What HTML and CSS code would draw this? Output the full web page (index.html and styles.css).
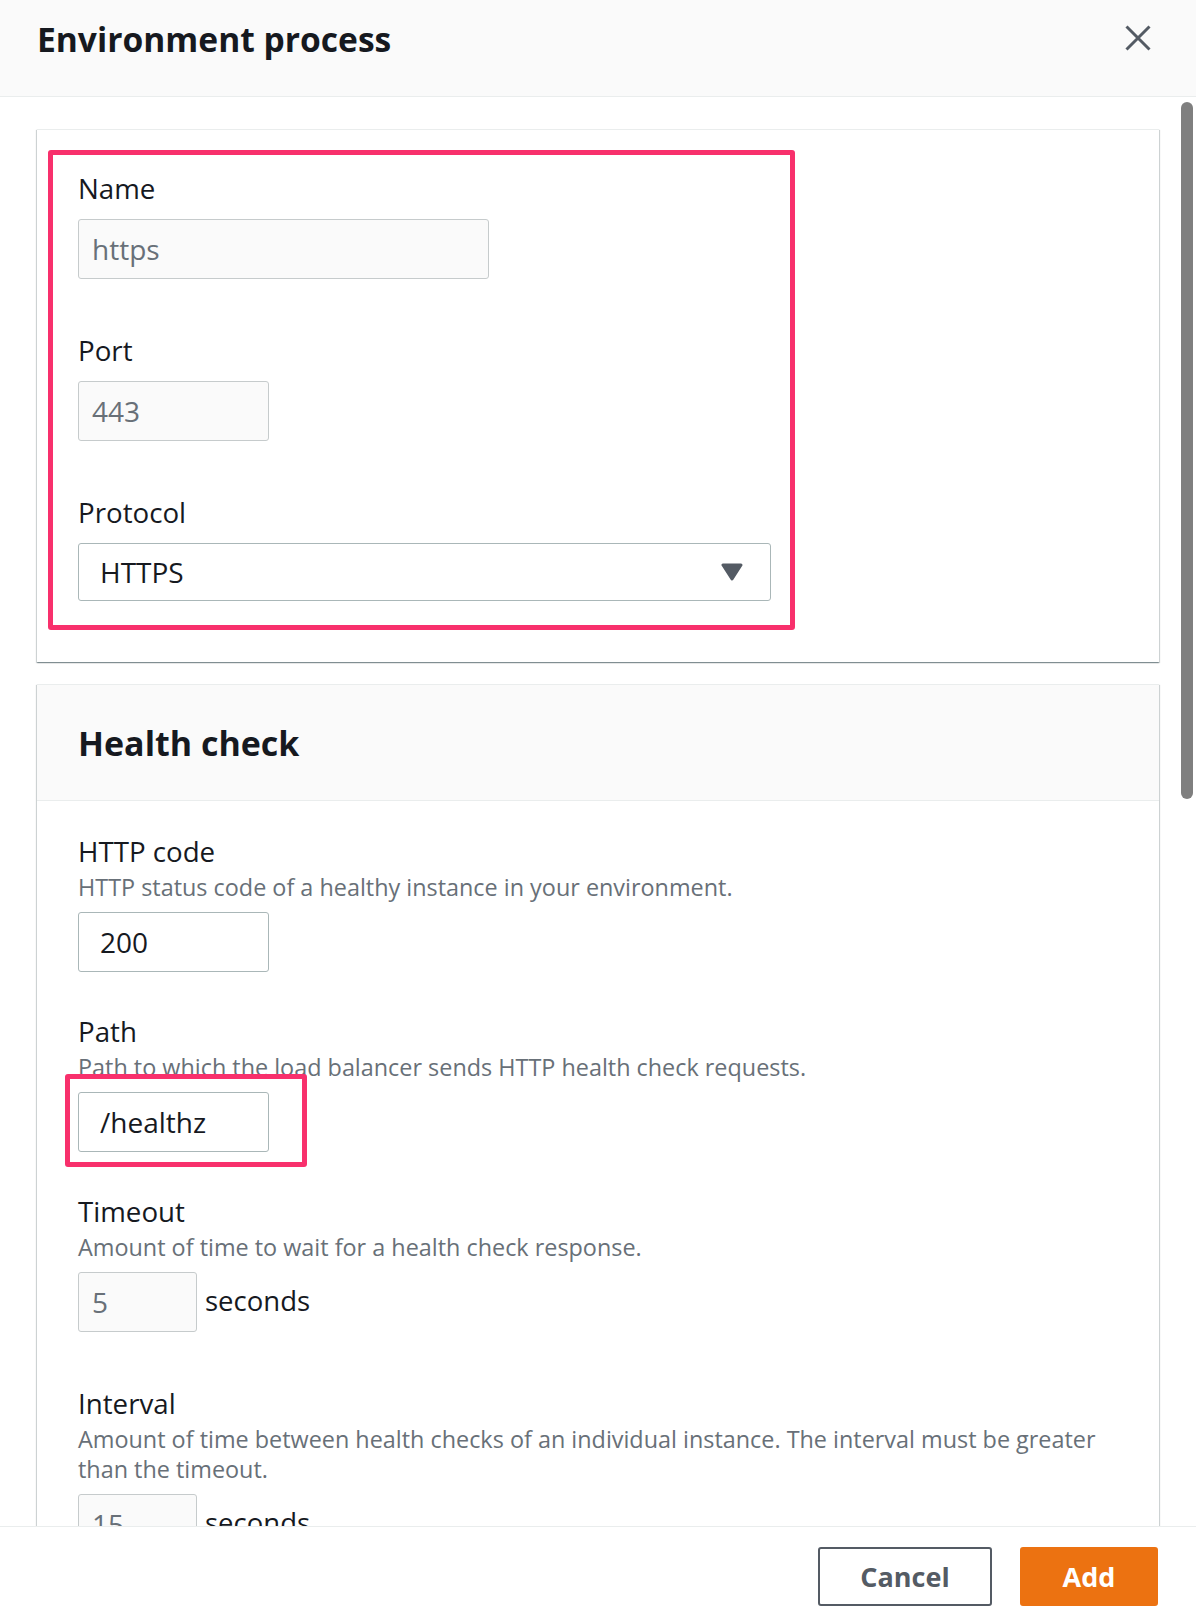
FILE: index.html
```html
<!DOCTYPE html>
<html lang="en">

<head>
    <meta charset="UTF-8">
    <meta name="viewport" content="width=device-width, initial-scale=1.0">
    <title>Environment process</title>
    <link rel="stylesheet" href="styles.css">
</head>

<body>

    <div class="modal">
        <div class="modal-header">
            <h2>Environment process</h2>
            <button class="close-btn" aria-label="Close">
                <svg width="26" height="26" viewBox="0 0 26 26">
                    <path d="M1.5 1.5L24.5 24.5M24.5 1.5L1.5 24.5" stroke="#545b64" stroke-width="3" fill="none" />
                </svg>
            </button>
        </div>

        <div class="modal-body">
            <div class="scroll-thumb"></div>

            <!-- Process settings -->
            <div class="card card-config">
                <div class="highlight">
                    <div class="field">
                        <label class="label">Name</label>
                        <input class="input disabled w-name" value="https" readonly>
                    </div>
                    <div class="field">
                        <label class="label">Port</label>
                        <input class="input disabled w-short" value="443" readonly>
                    </div>
                    <div class="field">
                        <label class="label">Protocol</label>
                        <div class="select">
                            <span>HTTPS</span>
                            <svg width="22" height="18" viewBox="0 0 22 18">
                                <path d="M2 2H20L11 16Z" fill="#545b64" stroke="#545b64" stroke-width="3" stroke-linejoin="round" />
                            </svg>
                        </div>
                    </div>
                </div>
            </div>

            <!-- Health check -->
            <div class="card card-health">
                <div class="card-header">
                    <h3>Health check</h3>
                </div>
                <div class="card-content">
                    <div class="field">
                        <label class="label">HTTP code</label>
                        <div class="desc">HTTP status code of a healthy instance in your environment.</div>
                        <input class="input control w-short" value="200">
                    </div>
                    <div class="field">
                        <label class="label">Path</label>
                        <div class="desc">Path to which the load balancer sends HTTP health check requests.</div>
                        <div class="input-wrap control">
                            <input class="input w-short" value="/healthz">
                            <div class="annot"></div>
                        </div>
                    </div>
                    <div class="field field-suffix">
                        <label class="label">Timeout</label>
                        <div class="desc">Amount of time to wait for a health check response.</div>
                        <div class="input-row control">
                            <input class="input disabled w-tiny" value="5" readonly>
                            <span class="suffix">seconds</span>
                        </div>
                    </div>
                    <div class="field">
                        <label class="label">Interval</label>
                        <div class="desc">Amount of time between health checks of an individual instance. The interval must be greater than the timeout.</div>
                        <div class="input-row control">
                            <input class="input disabled w-tiny" value="15" readonly>
                            <span class="suffix">seconds</span>
                        </div>
                    </div>
                </div>
            </div>
        </div>

        <div class="modal-footer">
            <button class="btn btn-cancel">Cancel</button>
            <button class="btn btn-add">Add</button>
        </div>
    </div>

</body>

</html>
```

FILE: styles.css
```css
* {
    margin: 0;
    padding: 0;
    box-sizing: border-box;
}

body {
    font-family: 'Open Sans', sans-serif;
    color: #16191f;
    background: #fff;
    height: 100vh;
    overflow: hidden;
}

.modal {
    display: flex;
    flex-direction: column;
    height: 100vh;
}

/* Header */
.modal-header {
    display: flex;
    justify-content: space-between;
    align-items: flex-start;
    height: 97px;
    padding: 19px 45px 0 37px;
    background: #fafafa;
    border-bottom: 1px solid #eaeded;
}

.modal-header h2 {
    font-size: 33.6px;
    line-height: 40px;
    font-weight: 700;
}

.close-btn {
    width: 26px;
    height: 26px;
    margin-top: 6px;
    background: none;
    border: none;
    cursor: pointer;
}

.close-btn svg {
    display: block;
}

/* Scrolling body */
.modal-body {
    flex: 1;
    position: relative;
    overflow: hidden;
    padding: 32px 37px 0;
}

.scroll-thumb {
    position: absolute;
    top: 5px;
    right: 3px;
    width: 12px;
    height: 697px;
    border-radius: 6px;
    background: #7f7f7f;
}

.card {
    background: #fff;
    border-top: 1px solid #eaeded;
    box-shadow: 0 1px 1px 0 rgba(0, 28, 36, 0.3),
        1px 1px 1px 0 rgba(0, 28, 36, 0.15),
        -1px 1px 1px 0 rgba(0, 28, 36, 0.15);
}

.card-config {
    padding: 20px 11px 32px;
}

.highlight {
    width: 747px;
    padding: 17px 19px 24px 25px;
    border: 5px solid #f8306c;
    border-radius: 3px;
}

.highlight .field + .field {
    margin-top: 55px;
}

.card-health {
    margin-top: 22px;
}

.card-header {
    padding: 38px 41px 37px;
    background: #fafafa;
    border-bottom: 1px solid #eaeded;
}

.card-header h3 {
    font-size: 34px;
    line-height: 40px;
    font-weight: 700;
}

.card-content {
    padding: 34px 41px;
}

.card-content .field + .field {
    margin-top: 43px;
}

.card-content .field-suffix + .field {
    margin-top: 55px;
}

/* Form fields */
.label {
    display: block;
    font-size: 27.7px;
    line-height: 32px;
    margin-bottom: 3px;
}

.card-content .label {
    margin-bottom: 5px;
}

.desc {
    font-size: 23.4px;
    line-height: 30px;
    color: #687078;
}

.control {
    margin-top: 10px;
}

.label + .input,
.label + .select {
    margin-top: 15px;
}

.input {
    display: block;
    height: 60px;
    padding: 0 21px;
    font-family: inherit;
    font-size: 28px;
    color: #16191f;
    background: #fff;
    border: 1px solid #aab7b8;
    border-radius: 3px;
    outline: none;
}

.input.disabled {
    padding: 0 13px;
    color: #687078;
    background: #fafafa;
    border-color: #c6cbcc;
}

.w-name {
    width: 411px;
}

.w-short {
    width: 191px;
}

.w-tiny {
    width: 119px;
}

.select {
    display: flex;
    justify-content: space-between;
    align-items: center;
    width: 693px;
    height: 58px;
    padding: 0 27px 0 21px;
    font-size: 28px;
    border: 1px solid #aab7b8;
    border-radius: 3px;
}

.select svg {
    display: block;
}

.input-wrap {
    position: relative;
    width: 191px;
}

/* Annotation frame drawn over the path input */
.annot {
    position: absolute;
    left: -13px;
    top: -18px;
    width: 242px;
    height: 93px;
    border: 5px solid #f8306c;
    border-radius: 3px;
}

.input-row {
    display: flex;
    align-items: center;
    gap: 8px;
}

.suffix {
    font-size: 27.5px;
    margin-bottom: 4px;
}

/* Footer */
.modal-footer {
    display: flex;
    justify-content: flex-end;
    gap: 28px;
    padding: 20px 38px 10px;
    border-top: 1px solid #eaeded;
    background: #fff;
}

.btn {
    height: 59px;
    font-family: inherit;
    font-size: 27px;
    font-weight: 700;
    border-radius: 3px;
    cursor: pointer;
}

.btn-cancel {
    width: 174px;
    color: #545b64;
    background: #fff;
    border: 2px solid #545b64;
}

.btn-add {
    width: 138px;
    color: #fff;
    background: #ec7211;
    border: 2px solid #ec7211;
}
```
